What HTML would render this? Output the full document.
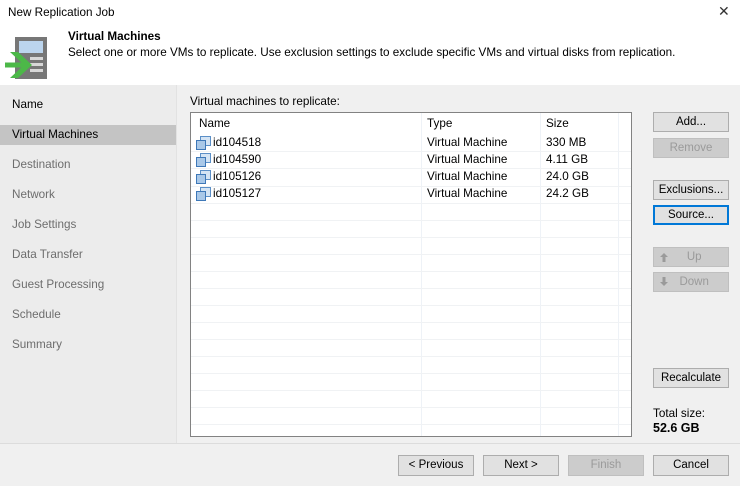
<!DOCTYPE html>
<html><head><meta charset="utf-8"><style>
*{margin:0;padding:0;box-sizing:border-box}
body{width:740px;height:486px;background:#f0f0f0;font-family:"Liberation Sans",sans-serif;font-size:11.7px;color:#000;position:relative;overflow:hidden}
.a{position:absolute}
.hdr{left:0;top:0;width:740px;height:85px;background:#fff}
.nav{left:0;top:85px;width:177px;height:358px;background:#ececec;border-right:1px solid #e2e2e2}
.ni{position:absolute;left:12px;color:#6d6d6d;font-size:11.7px}
.btn{position:absolute;width:76px;height:20px;background:#e1e1e1;border:1px solid #adadad;text-align:center;line-height:18px;font-size:11.5px}
.dis{background:#cccccc;border-color:#bfbfbf;color:#9a9a9a}
.tbl{left:190px;top:112px;width:442px;height:325px;background:#fff;border:1px solid #828282;overflow:hidden}
.vl{position:absolute;top:0;width:1px;height:325px;background:#eef2f7}
.hl{position:absolute;left:0;width:442px;height:1px;background:#f0f2f4}
.cell{position:absolute;font-size:11.7px}
.ic{position:absolute;left:5px;width:15px;height:14px}
</style></head><body>
<div class="a hdr"></div>
<div class="a" style="left:8px;top:6px">New Replication Job</div>
<div class="a" style="left:718px;top:3px;font-size:14px;color:#333">✕</div>
<svg class="a" style="left:0;top:30px" width="50" height="52">
<rect x="15" y="7" width="32" height="42" fill="#777"/>
<rect x="19" y="11" width="24" height="12" fill="#bcd5ee"/>
<rect x="30" y="27" width="13" height="3" fill="#d8d8d8"/><rect x="30" y="33" width="13" height="3" fill="#d8d8d8"/><rect x="30" y="39" width="13" height="3" fill="#d8d8d8"/>
<path d="M5 35h22" stroke="#4cb848" stroke-width="5"/>
<path d="M18 22l14 13-14 13h-8l14-13-14-13z" fill="#4cb848"/>
</svg>
<div class="a" style="left:68px;top:30px;font-weight:bold">Virtual Machines</div>
<div class="a" style="left:68px;top:46px">Select one or more VMs to replicate. Use exclusion settings to exclude specific VMs and virtual disks from replication.</div>
<div class="a nav"></div>
<div class="a" style="left:0;top:125px;width:176px;height:20px;background:#c4c4c4"></div>
<div class="ni" style="top:98px;color:#000">Name</div>
<div class="ni" style="top:128px;color:#000">Virtual Machines</div>
<div class="ni" style="top:158px">Destination</div>
<div class="ni" style="top:188px">Network</div>
<div class="ni" style="top:218px">Job Settings</div>
<div class="ni" style="top:248px">Data Transfer</div>
<div class="ni" style="top:278px">Guest Processing</div>
<div class="ni" style="top:308px">Schedule</div>
<div class="ni" style="top:338px">Summary</div>
<div class="a" style="left:190px;top:95px">Virtual machines to replicate:</div>
<div class="a tbl">
<div class="vl" style="left:230px"></div><div class="vl" style="left:349px"></div><div class="vl" style="left:427px"></div>
<div class="hl" style="top:38px"></div><div class="hl" style="top:55px"></div><div class="hl" style="top:73px"></div><div class="hl" style="top:90px"></div>
<div class="hl" style="top:107px"></div><div class="hl" style="top:124px"></div><div class="hl" style="top:141px"></div><div class="hl" style="top:158px"></div><div class="hl" style="top:175px"></div><div class="hl" style="top:192px"></div><div class="hl" style="top:209px"></div><div class="hl" style="top:226px"></div><div class="hl" style="top:243px"></div><div class="hl" style="top:260px"></div><div class="hl" style="top:277px"></div><div class="hl" style="top:294px"></div><div class="hl" style="top:311px"></div>
<div class="cell" style="left:8px;top:4px">Name</div><div class="cell" style="left:236px;top:4px">Type</div><div class="cell" style="left:355px;top:4px">Size</div>
<svg class="ic" style="top:23px" viewBox="0 0 15 14"><rect x="4.5" y="0.5" width="10" height="9" fill="#d4e4f4" stroke="#5b8fc7"/><rect x="0.5" y="4.5" width="9" height="9" fill="#a9c8e8" stroke="#3e78b8"/></svg>
<div class="cell" style="left:22px;top:23px">id104518</div><div class="cell" style="left:236px;top:23px">Virtual Machine</div><div class="cell" style="left:355px;top:23px">330 MB</div>
<svg class="ic" style="top:40px" viewBox="0 0 15 14"><rect x="4.5" y="0.5" width="10" height="9" fill="#d4e4f4" stroke="#5b8fc7"/><rect x="0.5" y="4.5" width="9" height="9" fill="#a9c8e8" stroke="#3e78b8"/></svg>
<div class="cell" style="left:22px;top:40px">id104590</div><div class="cell" style="left:236px;top:40px">Virtual Machine</div><div class="cell" style="left:355px;top:40px">4.11 GB</div>
<svg class="ic" style="top:57px" viewBox="0 0 15 14"><rect x="4.5" y="0.5" width="10" height="9" fill="#d4e4f4" stroke="#5b8fc7"/><rect x="0.5" y="4.5" width="9" height="9" fill="#a9c8e8" stroke="#3e78b8"/></svg>
<div class="cell" style="left:22px;top:57px">id105126</div><div class="cell" style="left:236px;top:57px">Virtual Machine</div><div class="cell" style="left:355px;top:57px">24.0 GB</div>
<svg class="ic" style="top:74px" viewBox="0 0 15 14"><rect x="4.5" y="0.5" width="10" height="9" fill="#d4e4f4" stroke="#5b8fc7"/><rect x="0.5" y="4.5" width="9" height="9" fill="#a9c8e8" stroke="#3e78b8"/></svg>
<div class="cell" style="left:22px;top:74px">id105127</div><div class="cell" style="left:236px;top:74px">Virtual Machine</div><div class="cell" style="left:355px;top:74px">24.2 GB</div>
</div>
<div class="btn" style="left:653px;top:112px">Add...</div>
<div class="btn dis" style="left:653px;top:138px">Remove</div>
<div class="btn" style="left:653px;top:180px">Exclusions...</div>
<div class="btn" style="left:653px;top:205px;border:2px solid #0078d7;line-height:16px">Source...</div>
<div class="btn dis" style="left:653px;top:247px"><svg style="position:absolute;left:6px;top:5px" width="8" height="9"><path d="M4 0L8 4H5.5V9h-3V4H0z" fill="#9a9a9a"/></svg>&nbsp;&nbsp;Up</div>
<div class="btn dis" style="left:653px;top:272px"><svg style="position:absolute;left:6px;top:4px" width="8" height="9"><path d="M4 9L8 5H5.5V0h-3V5H0z" fill="#9a9a9a"/></svg>&nbsp;&nbsp;Down</div>
<div class="btn" style="left:653px;top:368px">Recalculate</div>
<div class="a" style="left:653px;top:407px">Total size:</div>
<div class="a" style="left:653px;top:421px;font-weight:bold;font-size:12.5px">52.6 GB</div>
<div class="a" style="left:0;top:443px;width:740px;height:1px;background:#dcdcdc"></div>
<div class="btn" style="left:398px;top:455px;height:21px">&lt; Previous</div>
<div class="btn" style="left:483px;top:455px;height:21px">Next &gt;</div>
<div class="btn dis" style="left:568px;top:455px;height:21px">Finish</div>
<div class="btn" style="left:653px;top:455px;height:21px">Cancel</div>
</body></html>
